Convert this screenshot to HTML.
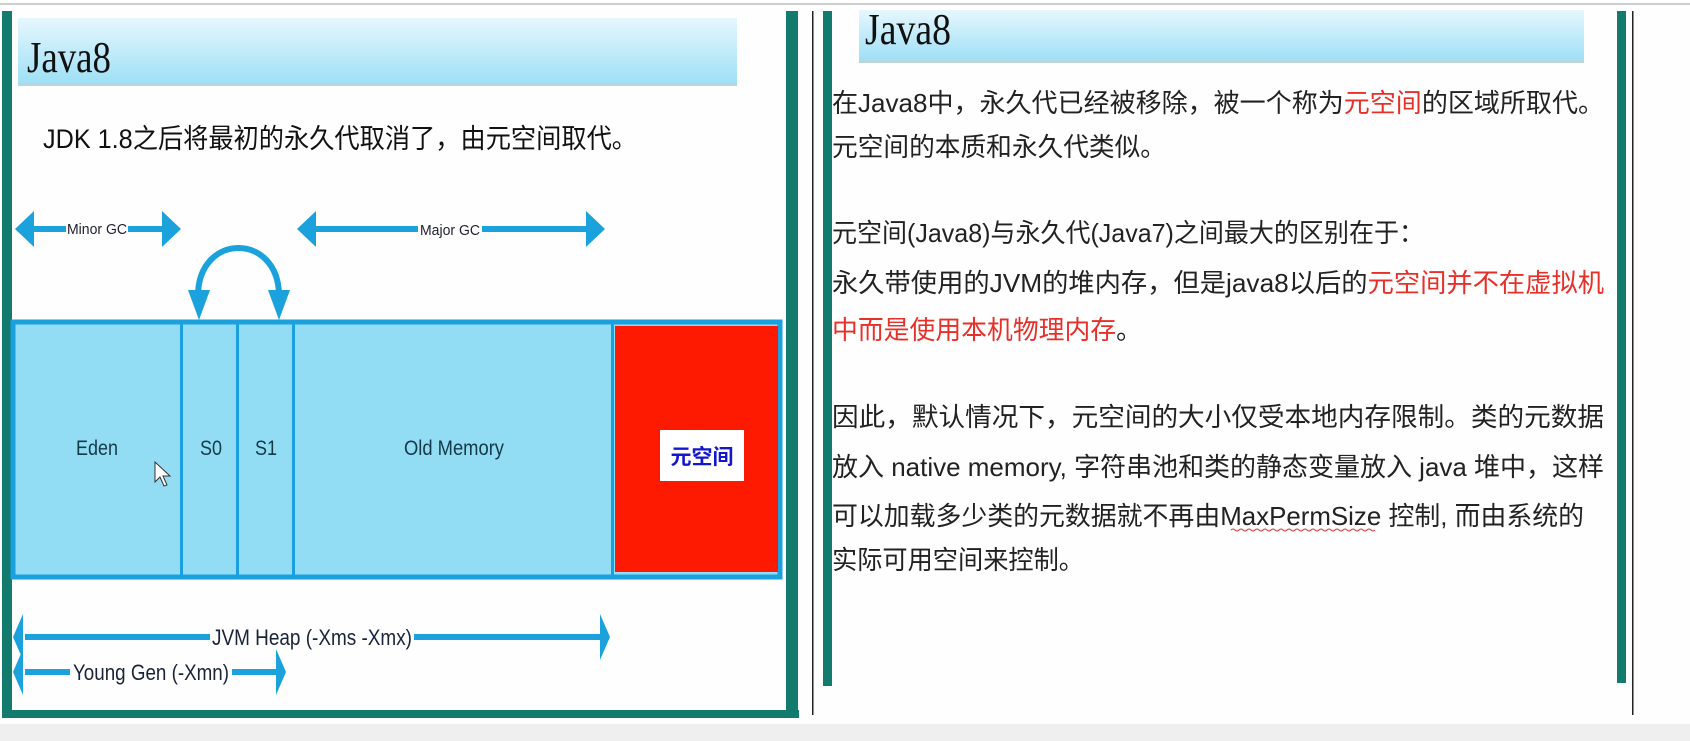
<!DOCTYPE html>
<html><head><meta charset="utf-8"><style>
html,body{margin:0;padding:0;background:#fdfefd;}
svg{display:block}
</style></head><body>
<svg width="1690" height="741" viewBox="0 0 1690 741" xmlns="http://www.w3.org/2000/svg">
<defs>
<linearGradient id="hb" x1="0" y1="0" x2="0" y2="1">
<stop offset="0" stop-color="#e6f7fd"/><stop offset="1" stop-color="#9fe0f6"/>
</linearGradient>
</defs>
<rect x="0" y="0" width="1690" height="741" fill="#fdfefd"/>
<rect x="0" y="3" width="1690" height="2" fill="#cfcfcf"/>
<rect x="0" y="724" width="1690" height="17" fill="#efefef"/>

<!-- left slide frame -->
<rect x="2" y="11" width="10" height="707" fill="#137a6e"/>
<rect x="2" y="710" width="797" height="8" fill="#137a6e"/>
<rect x="786" y="11" width="12" height="707" fill="#137a6e"/>
<rect x="812" y="11" width="1.5" height="704" fill="#222"/>

<!-- left heading -->
<rect x="18" y="18" width="719" height="65" fill="url(#hb)"/>
<rect x="18" y="83" width="719" height="3" fill="#8fb9c8" opacity="0.6"/>
<text x="27" y="72" font-family="Liberation Serif, serif" font-size="44" fill="#111" textLength="84" lengthAdjust="spacingAndGlyphs">Java8</text>
<text x="43" y="148" font-family="'Liberation Sans','Noto Sans CJK SC',sans-serif" font-size="27" fill="#111" textLength="594" lengthAdjust="spacingAndGlyphs">JDK 1.8之后将最初的永久代取消了，由元空间取代。</text>

<!-- GC arrows -->
<g fill="#1ba1dc" stroke="none">
<rect x="30" y="226" width="136" height="6"/>
<polygon points="15,229 34,211 34,247"/>
<polygon points="181,229 162,211 162,247"/>
<rect x="312" y="226" width="278" height="6"/>
<polygon points="297,229 316,211 316,247"/>
<polygon points="605,229 586,211 586,247"/>
</g>
<rect x="66" y="217" width="62" height="22" fill="#fdfefd"/>
<text x="97" y="234" text-anchor="middle" font-family="'Liberation Sans',sans-serif" font-size="15" fill="#223" textLength="60" lengthAdjust="spacingAndGlyphs">Minor GC</text>
<rect x="418" y="218" width="64" height="22" fill="#fdfefd"/>
<text x="450" y="235" text-anchor="middle" font-family="'Liberation Sans',sans-serif" font-size="15" fill="#223" textLength="60" lengthAdjust="spacingAndGlyphs">Major GC</text>

<!-- arc -->
<path d="M198 296 C198 232 279 232 279 296" fill="none" stroke="#1ba1dc" stroke-width="6"/>
<polygon points="188,290 210,290 199,320" fill="#1ba1dc"/>
<polygon points="268,290 290,290 279,320" fill="#1ba1dc"/>

<!-- heap box -->
<rect x="13" y="322" width="767" height="255" fill="#93ddf4" stroke="#1aa0dd" stroke-width="5"/>
<g fill="#1aa0dd">
<rect x="180" y="322" width="3" height="255"/>
<rect x="236" y="322" width="3" height="255"/>
<rect x="292" y="322" width="3" height="255"/>
<rect x="611" y="322" width="3" height="255"/>
</g>
<rect x="615" y="326" width="163" height="246" fill="#fd1a00"/>
<rect x="660" y="430" width="84" height="51" fill="#fff"/>
<text x="702" y="464" text-anchor="middle" font-family="'Noto Sans CJK SC',sans-serif" font-weight="bold" font-size="21" fill="#1515d0">元空间</text>
<g font-family="'Liberation Sans',sans-serif" font-size="21" fill="#143a4a" text-anchor="middle">
<text x="97" y="455" textLength="42" lengthAdjust="spacingAndGlyphs">Eden</text>
<text x="211" y="455" textLength="22" lengthAdjust="spacingAndGlyphs">S0</text>
<text x="266" y="455" textLength="22" lengthAdjust="spacingAndGlyphs">S1</text>
<text x="454" y="455" textLength="100" lengthAdjust="spacingAndGlyphs">Old Memory</text>
</g>
<!-- cursor -->
<path d="M155 462 L155 482 L160 477 L164 486 L167 485 L163 476 L170 476 Z" fill="#fff" stroke="#333" stroke-width="1"/>

<!-- heap arrows -->
<g fill="#1ba1dc">
<rect x="25" y="634" width="580" height="6"/>
<polygon points="13,637 23,614 23,660"/>
<polygon points="610,637 600,614 600,660"/>
<rect x="25" y="669" width="255" height="6"/>
<polygon points="13,672 23,649 23,695"/>
<polygon points="286,672 276,649 276,695"/>
</g>
<rect x="210" y="622" width="204" height="28" fill="#fdfefd"/>
<text x="312" y="645" text-anchor="middle" font-family="'Liberation Sans',sans-serif" font-size="22" fill="#1a2438" textLength="200" lengthAdjust="spacingAndGlyphs">JVM Heap (-Xms -Xmx)</text>
<rect x="70" y="657" width="162" height="28" fill="#fdfefd"/>
<text x="151" y="680" text-anchor="middle" font-family="'Liberation Sans',sans-serif" font-size="22" fill="#1a2438" textLength="156" lengthAdjust="spacingAndGlyphs">Young Gen (-Xmn)</text>

<!-- right slide -->
<rect x="823" y="11" width="9" height="675" fill="#137a6e"/>
<rect x="1617" y="11" width="9" height="672" fill="#137a6e"/>
<rect x="1632" y="11" width="1.5" height="704" fill="#222"/>
<rect x="859" y="10" width="725" height="50" fill="url(#hb)"/>
<rect x="859" y="60" width="725" height="3" fill="#8fb9c8" opacity="0.6"/>
<text x="865" y="44" font-family="Liberation Serif, serif" font-size="44" fill="#111" textLength="86" lengthAdjust="spacingAndGlyphs">Java8</text>

<g font-family="'Liberation Sans','Noto Sans CJK SC',sans-serif" font-size="26" fill="#222">
<text x="832" y="112" textLength="772" lengthAdjust="spacingAndGlyphs">在Java8中，永久代已经被移除，被一个称为<tspan fill="#e8302a">元空间</tspan>的区域所取代。</text>
<text x="832" y="156" textLength="334" lengthAdjust="spacingAndGlyphs">元空间的本质和永久代类似。</text>
<text x="832" y="242" textLength="592" lengthAdjust="spacingAndGlyphs">元空间(Java8)与永久代(Java7)之间最大的区别在于：</text>
<text x="832" y="292" textLength="772" lengthAdjust="spacingAndGlyphs">永久带使用的JVM的堆内存，但是java8以后的<tspan fill="#e8302a">元空间并不在虚拟机</tspan></text>
<text x="832" y="339" textLength="310" lengthAdjust="spacingAndGlyphs"><tspan fill="#e8302a">中而是使用本机物理内存</tspan>。</text>
<text x="832" y="426" textLength="772" lengthAdjust="spacingAndGlyphs">因此，默认情况下，元空间的大小仅受本地内存限制。类的元数据</text>
<text x="832" y="476" textLength="772" lengthAdjust="spacingAndGlyphs">放入 native memory, 字符串池和类的静态变量放入 java 堆中，这样</text>
<text x="832" y="525" textLength="752" lengthAdjust="spacingAndGlyphs">可以加载多少类的元数据就不再由MaxPermSize 控制, 而由系统的</text>
<text x="832" y="569" textLength="252" lengthAdjust="spacingAndGlyphs">实际可用空间来控制。</text>
</g>
<path d="M1231 530 q2 -2 4 0 t4 0 t4 0 t4 0 t4 0 t4 0 t4 0 t4 0 t4 0 t4 0 t4 0 t4 0 t4 0 t4 0 t4 0 t4 0 t4 0 t4 0 t4 0 t4 0 t4 0 t4 0 t4 0 t4 0 t4 0 t4 0 t4 0 t4 0 t4 0 t4 0 t4 0 t4 0 t4 0 t4 0 t4 0 t4 0" fill="none" stroke="#d33" stroke-width="1"/>
</svg>
</body></html>
